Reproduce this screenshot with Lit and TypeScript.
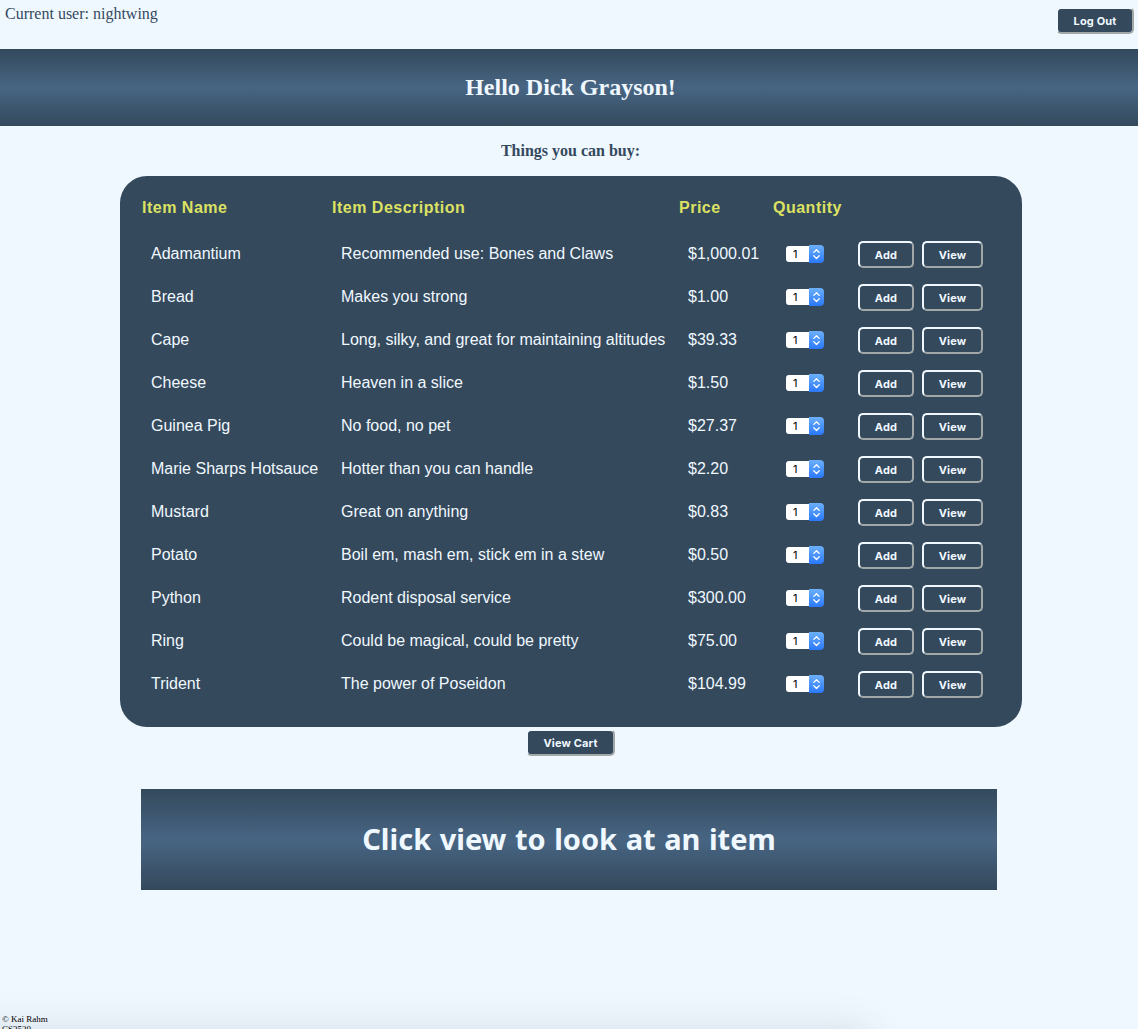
import { LitElement, html, css } from "lit";
import { customElement, property } from "lit/decorators.js";

interface Item {
  name: string;
  description: string;
  price: string;
}

const ITEMS: Item[] = [
  { name: "Adamantium", description: "Recommended use: Bones and Claws", price: "$1,000.01" },
  { name: "Bread", description: "Makes you strong", price: "$1.00" },
  { name: "Cape", description: "Long, silky, and great for maintaining altitudes", price: "$39.33" },
  { name: "Cheese", description: "Heaven in a slice", price: "$1.50" },
  { name: "Guinea Pig", description: "No food, no pet", price: "$27.37" },
  { name: "Marie Sharps Hotsauce", description: "Hotter than you can handle", price: "$2.20" },
  { name: "Mustard", description: "Great on anything", price: "$0.83" },
  { name: "Potato", description: "Boil em, mash em, stick em in a stew", price: "$0.50" },
  { name: "Python", description: "Rodent disposal service", price: "$300.00" },
  { name: "Ring", description: "Could be magical, could be pretty", price: "$75.00" },
  { name: "Trident", description: "The power of Poseidon", price: "$104.99" },
];

@customElement("quantity-picker")
class QuantityPicker extends LitElement {
  @property({ type: Number }) value = 1;

  static styles = css`
    :host {
      display: flex;
      align-items: center;
      width: 38px;
      height: 18px;
    }
    .value {
      box-sizing: border-box;
      width: 23px;
      height: 16px;
      padding-left: 7px;
      border-radius: 3px 0 0 3px;
      background: #fff;
      color: #000;
      font: 11px/16px Inter, "Liberation Sans", sans-serif;
    }
    .arrows {
      width: 15px;
      height: 18px;
      border-radius: 0 4px 4px 0;
      background: linear-gradient(#6cb0fa, #2a78fb);
    }
    svg {
      display: block;
    }
  `;

  render() {
    return html`<span class="value">${this.value}</span
      ><span class="arrows"
        ><svg width="15" height="18" viewBox="0 0 15 18" fill="none" stroke="#fff" stroke-width="1.3" stroke-linecap="round" stroke-linejoin="round">
          <path d="M4.8 7.4 7.5 4.7l2.7 2.7M4.8 10.8l2.7 2.7 2.7-2.7" /></svg
      ></span>`;
  }
}

@customElement("app-root")
class AppRoot extends LitElement {
  static styles = css`
    :host {
      display: block;
      height: 1029px;
      overflow: hidden;
      background: #f0f8ff;
      color: #34495e;
      font: 16px/18px "Liberation Serif", serif;
    }
    .page {
      position: relative;
      display: flex;
      flex-direction: column;
      height: 1029px;
      overflow: hidden;
    }
    .top {
      display: flex;
      flex: none;
      justify-content: space-between;
      box-sizing: border-box;
      height: 49px;
      padding: 5px 4px 0 5px;
    }
    button {
      box-sizing: border-box;
      height: 27px;
      margin: 0;
      padding: 2px 0 0;
      border: 2px solid;
      border-color: #f0f8ff #a2a7a8 #a2a7a8 #f0f8ff;
      border-radius: 5px;
      background: #34495c;
      color: #f0f8ff;
      font: bold 11px/13px Inter, sans-serif;
      letter-spacing: 0.15px;
    }
    .logout {
      width: 78px;
      margin-top: 2px;
    }
    .hello {
      flex: none;
      height: 77px;
      margin: 0;
      background: linear-gradient(#34495c, #476583, #34495c);
      color: #f0f8ff;
      font-size: 24px;
      line-height: 77px;
      text-align: center;
      text-indent: 3px;
    }
    .subtitle {
      margin: 16px 0;
      font-size: 16px;
      line-height: 18px;
      text-align: center;
      text-indent: 3px;
    }
    .card {
      box-sizing: border-box;
      flex: none;
      width: 902px;
      height: 551px;
      margin-left: 120px;
      padding: 14px 22px 0;
      border-radius: 27px;
      background: #34495c;
      color: #f0f8ff;
      font-family: "Liberation Sans", sans-serif;
    }
    .row {
      display: grid;
      grid-template-columns: 190px 347px 98px 72px 64px 1fr;
      align-items: center;
      height: 43px;
      padding-left: 9px;
      white-space: nowrap;
    }
    .row span,
    quantity-picker {
      margin-bottom: 2px;
    }
    .head {
      grid-template-columns: 190px 347px 94px 1fr;
      height: 35px;
      margin-bottom: 8px;
      padding-left: 0;
      color: #dce162;
      font-weight: bold;
      letter-spacing: 0.5px;
    }
    .head span {
      margin-bottom: 0;
    }
    .add {
      width: 56px;
    }
    .view {
      width: 61px;
    }
    .cart {
      flex: none;
      width: 89px;
      margin: 2px 0 0 526px;
    }
    .preview {
      flex: none;
      width: 856px;
      height: 101px;
      margin: 33px 0 0 141px;
      background: linear-gradient(#34495c, #476583, #34495c);
      color: #f0f8ff;
      font: bold 29px/100px "Noto Sans", sans-serif;
      word-spacing: 1px;
      text-align: center;
    }
    .footer {
      margin: 124px 0 0 2px;
      color: #000;
      font-size: 9px;
      line-height: 10px;
    }
    .shade {
      position: absolute;
      top: 1032px;
      left: -80px;
      width: 950px;
      height: 100px;
      box-shadow: 0 0 40px rgba(30, 40, 55, 0.15);
    }
  `;

  render() {
    return html`
      <div class="page">
        <header class="top">
          <span>Current user: nightwing</span>
          <button class="logout">Log Out</button>
        </header>
        <h2 class="hello">Hello Dick Grayson!</h2>
        <h4 class="subtitle">Things you can buy:</h4>
        <section class="card">
          <div class="row head">
            <span>Item Name</span><span>Item Description</span><span>Price</span><span>Quantity</span>
          </div>
          ${ITEMS.map(
            (item) => html`
              <div class="row">
                <span>${item.name}</span>
                <span>${item.description}</span>
                <span>${item.price}</span>
                <quantity-picker></quantity-picker>
                <button class="add">Add</button>
                <button class="view">View</button>
              </div>
            `,
          )}
        </section>
        <button class="cart">View Cart</button>
        <div class="preview">Click view to look at an item</div>
        <footer class="footer">© Kai Rahm<br />CS3520</footer>
        <div class="shade"></div>
      </div>
    `;
  }
}
